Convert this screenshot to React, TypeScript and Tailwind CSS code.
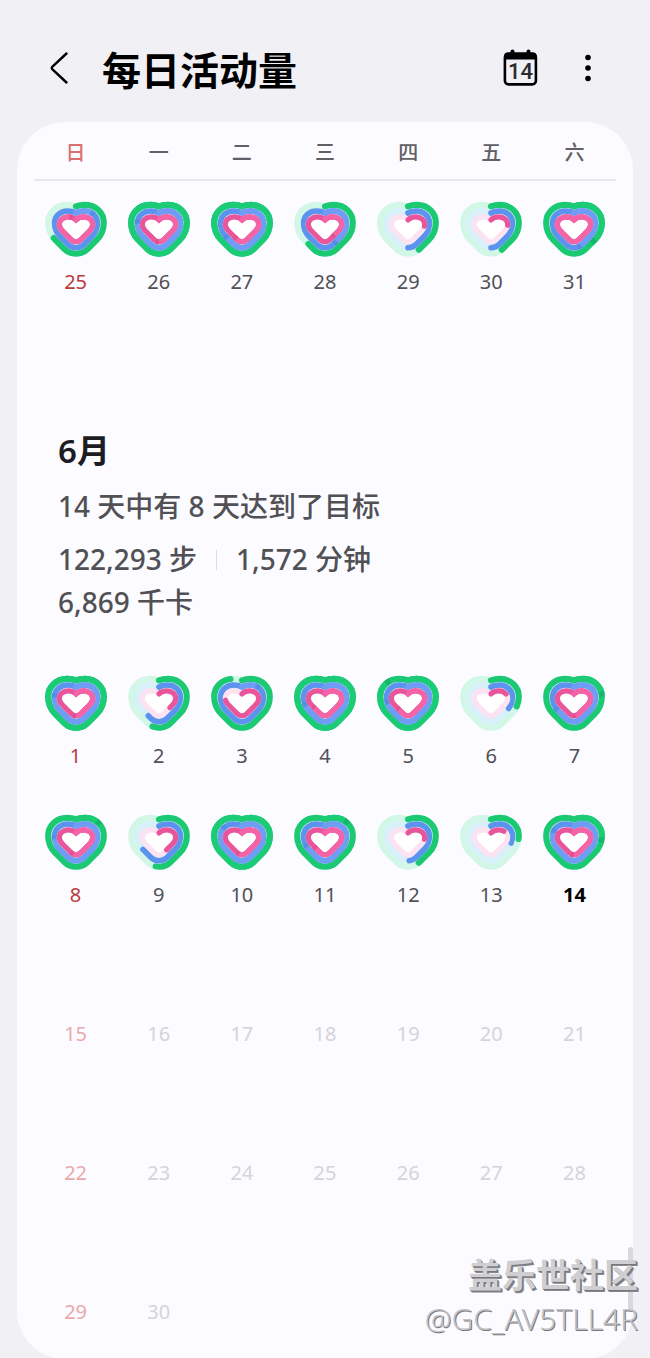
import React from "react";

type Ring = { end: number; seam?: number };
type Rings = [Ring, Ring, Ring];
type Day = { n: number; rings?: Rings; today?: boolean; future?: boolean };

const part = (end: number): Ring => ({ end });
const full = (seam: number): Ring => ({ end: 100, seam });

const MAY: Day[] = [
  { n: 25, rings: [part(67), full(12), full(92)] },
  { n: 26, rings: [full(99), full(77), full(50)] },
  { n: 27, rings: [full(99), full(64), full(57)] },
  { n: 28, rings: [part(62), full(39), full(37)] },
  { n: 29, rings: [part(43), part(50), part(25)] },
  { n: 30, rings: [part(43), part(50), part(24)] },
  { n: 31, rings: [full(34), full(44), full(98)] },
];

const JUNE: Day[][] = [
  [
    { n: 1, rings: [full(99), full(77), full(50)] },
    { n: 2, rings: [part(54), part(60), part(35)] },
    { n: 3, rings: [part(93), full(11), part(75)] },
    { n: 4, rings: [full(99), full(70), full(64)] },
    { n: 5, rings: [full(86), full(72), full(62)] },
    { n: 6, rings: [part(29), part(32), part(18)] },
    { n: 7, rings: [full(20), full(66), full(48)] },
  ],
  [
    { n: 8, rings: [full(13), full(75), full(53)] },
    { n: 9, rings: [part(52), part(66), part(40)] },
    { n: 10, rings: [full(99), full(83), full(53)] },
    { n: 11, rings: [full(12), full(68), full(62)] },
    { n: 12, rings: [part(43), part(49), part(25)] },
    { n: 13, rings: [part(25), part(28), part(15)] },
    { n: 14, rings: [full(24), full(80), full(50)], today: true },
  ],
  [15, 16, 17, 18, 19, 20, 21].map((n) => ({ n, future: true })),
  [22, 23, 24, 25, 26, 27, 28].map((n) => ({ n, future: true })),
  [29, 30].map((n) => ({ n, future: true })),
];

const SHAPES = [
  {
    d: "M32 5.4C35 4.3 38 3.9 41 3.9C52 3.9 59.8 12 59.8 21.5C59.8 28 57 34.5 53 38.5L43 48.5C37.5 54 26.5 54 21 48.5L11 38.5C7 34.5 4.2 28 4.2 21.5C4.2 12 12 3.9 23 3.9C26 3.9 29 4.3 32 5.4Z",
    track: "#d3f7e6",
    base: "#1bc973",
    lap: "#1bcb75",
    seam: "#12a866",
    width: 6.1,
  },
  {
    d: "M32 12C34.5 10.5 37.500 10 40.5 10C48 10 53.4 15.500 53.4 22C53.4 27.5 50.8 32.7 48 35.5L40 43.5C35.6 47.900 28.4 47.900 24 43.500L16 35.5C13.200 32.7 10.600 27.5 10.600 22C10.600 15.5 16 10 23.5 10C26.5 10 29.5 10.5 32 12Z",
    track: "#d8f0fa",
    base: "#5b93ef",
    lap: "#6f9df6",
    seam: "#477fd8",
    width: 5.6,
  },
  {
    d: "M32 18.8C34.3 16.500 37 15.8 39.8 15.8C45 15.8 48.700 19.5 48.700 23.4C48.700 26 47 28.5 45 30.5L36.400 39C33.800 41.300 30.200 41.300 27.600 39L19 30.5C17 28.5 15.300 26 15.300 23.400C15.300 19.5 19 15.8 24.2 15.8C27 15.8 29.700 16.500 32 18.8Z",
    track: "#fde3f2",
    base: "#e9559b",
    lap: "#f363a5",
    seam: "#d53f83",
    width: 5.2,
  },
];

function Heart({ rings }: { rings: Rings }) {
  return (
    <svg viewBox="0 0 64 56" className="h-14 w-16" fill="none" strokeLinecap="round" aria-hidden="true">
      <path d={SHAPES[0].d} fill="#d3f5ee" />
      <path d={SHAPES[1].d} fill="#e2e6fb" />
      <path d={SHAPES[2].d} fill="#fff" />
      {SHAPES.map((s, i) => {
        const r = rings[i];
        return (
          <g key={s.base} strokeWidth={s.width}>
            <path d={s.d} stroke={s.track} />
            <path d={s.d} stroke={s.base} pathLength={100} strokeDasharray={r.end === 100 ? undefined : `${r.end} 100`} />
            {r.seam !== undefined && (
              <>
                <path d={s.d} stroke={s.lap} pathLength={100} strokeDasharray={`${r.seam} 100`} />
                {r.seam < 98 && (
                  <path
                    d={s.d}
                    stroke={s.seam}
                    strokeOpacity={0.55}
                    strokeLinecap="butt"
                    pathLength={100}
                    strokeDasharray={`0 ${r.seam} 3 100`}
                  />
                )}
              </>
            )}
          </g>
        );
      })}
    </svg>
  );
}

function Week({ days, month }: { days: Day[]; month: number }) {
  return (
    <div className="grid grid-cols-7">
      {days.map((day, i) => {
        const tone = day.future
          ? i === 0
            ? "text-[#e9aaaa]"
            : "text-[#d5d4d8]"
          : day.today
            ? "font-bold text-black"
            : i === 0
              ? "text-[#b83c3c]"
              : "text-[#505055]";
        return (
          <button
            key={day.n}
            type="button"
            disabled={day.future}
            aria-label={`${month}月${day.n}日`}
            className="flex flex-col items-center gap-[11px]"
          >
            <span className="h-14">{day.rings && <Heart rings={day.rings} />}</span>
            <span className={`text-xl leading-7 ${tone}`}>{day.n}</span>
          </button>
        );
      })}
    </div>
  );
}

export default function App() {
  return (
    <div className="relative min-h-screen bg-[#f1f0f5] font-['Noto_Sans','Noto_Sans_CJK_SC',sans-serif]">
      <header className="flex h-[122px] items-center pr-[46px] pb-[14px] pl-11">
        <button type="button" aria-label="返回" className="flex w-8 shrink-0 pt-7">
          <svg viewBox="0 0 32 36" className="h-9 w-8" fill="none" stroke="#000" strokeWidth="2.4" strokeLinecap="round" strokeLinejoin="round">
            <path d="M22.5 3.5L8.2 16.9Q7.2 18 8.2 19.1L22.5 32.5" />
          </svg>
        </button>
        <h1 className="ml-[26px] flex-1 pt-8 text-[39px] leading-[48px] font-bold text-black">每日活动量</h1>
        <button type="button" aria-label="今天" className="shrink-0 pt-7">
          <svg viewBox="0 0 36 40" className="h-10 w-9">
            <rect x="2.9" y="5.9" width="31" height="30.500" rx="3.6" fill="none" stroke="#000" strokeWidth="2.6" />
            <path d="M2 11.500V8.5Q2 4.600 5.5 4.600H31Q34.800 4.600 34.800 8.500V11.500Z" fill="#000" />
            <path d="M10.500 3.500V8M26.500 3.500V8" stroke="#000" strokeWidth="4" strokeLinecap="round" />
            <text x="18.500" y="30.500" textAnchor="middle" fontFamily="Roboto, sans-serif" fontSize="22" fontWeight="500" fill="#2b2b2e">
              14
            </text>
          </svg>
        </button>
        <button type="button" aria-label="更多选项" className="ml-[34px] shrink-0 pt-7">
          <svg viewBox="0 0 32 36" className="h-9 w-8">
            <circle cx="16" cy="7.500" r="2.800" />
            <circle cx="16" cy="18" r="2.800" />
            <circle cx="16" cy="28.500" r="2.800" />
          </svg>
        </button>
      </header>

      <main className="mx-[17px] rounded-[48px] bg-[#fcfbff] px-[17px] pb-[33px]">
        <div className="grid h-[59px] grid-cols-7 items-center border-b-2 border-[#e7e6ed] pt-1 text-center text-xl font-medium text-[#606065]">
          {["日", "一", "二", "三", "四", "五", "六"].map((d, i) => (
            <span key={d} className={i === 0 ? "text-[#d9706e]" : undefined}>
              {d}
            </span>
          ))}
        </div>

        <section aria-label="5月" className="pt-5">
          <Week days={MAY} month={5} />
        </section>

        <section className="pt-[131px]">
          <div className="px-6 text-[28px] leading-[43px] font-medium text-[#505055]">
            <h2 className="text-[33px] leading-[48px] font-semibold text-[#1c1c22]">6月</h2>
            <p className="mt-[10px]">14 天中有 8 天达到了目标</p>
            <div className="mt-[10px] flex flex-wrap items-center">
              <span>122,293 步</span>
              <span className="mx-[19px] h-5 w-px bg-[#dddce3]" />
              <span>1,572 分钟</span>
            </div>
            <p>6,869 千卡</p>
          </div>
          <div className="mt-[51px] flex flex-col gap-11">
            {JUNE.map((week) => (
              <Week key={week[0].n} days={week} month={6} />
            ))}
          </div>
        </section>
      </main>

      <div className="absolute right-[17px] bottom-12 h-16 w-[5px] rounded-full bg-[#d9d8de]" />
      <div className="pointer-events-none absolute right-3 bottom-[18px] text-right">
        <p className="text-[34px] leading-[44px] font-bold text-[#cfcfd2] [text-shadow:1px_1px_0_#77777b,2px_2px_0_#88888c]">盖乐世社区</p>
        <p className="text-[30px] leading-[44px] font-light text-[#c2c2c5] [text-shadow:1px_1px_0_#77777b]">@GC_AV5TLL4R</p>
      </div>
    </div>
  );
}
